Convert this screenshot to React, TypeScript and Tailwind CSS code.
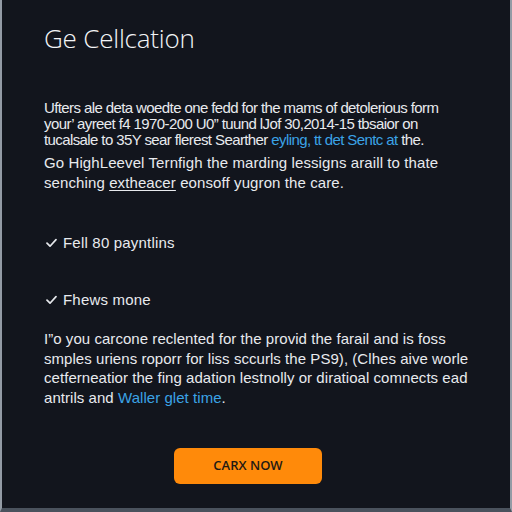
import React from 'react';

const checks = ['Fell 80 payntlins', 'Fhews mone'];

const Check = () => (
  <svg width="11" height="10" viewBox="0 0 11 10" fill="none" className="shrink-0">
    <path d="M1 5.2 4 8.2 10 1.6" stroke="#e5e7eb" strokeWidth="1.7" strokeLinecap="round" strokeLinejoin="round" />
  </svg>
);

export default function App() {
  return (
    <div
      className="flex h-[512px] w-[512px] flex-col border-x-2 border-b-4 border-x-[#939ba5] border-b-[#4a525d] bg-[#12151d] px-[42px] pt-[22px] text-[#e8eaee]"
      style={{ fontFamily: '"Liberation Sans", Arial, sans-serif' }}
    >
      <h1
        className="text-[26px] font-light leading-[32px] tracking-[-0.2px] text-[#f3f4f6]"
        style={{ fontFamily: '"Open Sans", "Noto Sans", sans-serif' }}
      >
        Ge Cellcation
      </h1>

      <p className="mt-[46px] whitespace-nowrap text-[15px] leading-[16px] tracking-[-0.6px]">
        Ufters ale deta woedte one fedd for the mams of detolerious form
        <br />
        your&rsquo; ayreet f4 1970-200 U0&rdquo; tuund lJof 30,2014-15 tbsaior on
        <br />
        tucalsale to 35Y sear flerest Searther{' '}
        <span className="text-[#3ba3e6]">eyling, tt det Sentc at</span> the.
      </p>

      <p className="mt-[5px] whitespace-nowrap text-[15px] leading-[19.5px] tracking-[0.1px]">
        Go HighLeevel Ternfigh the marding lessigns araill to thate
        <br />
        senching <span className="underline underline-offset-2">extheacer</span> eonsoff yugron the care.
      </p>

      <div className="mt-[41px] flex flex-col gap-[37px]">
        {checks.map((c) => (
          <div key={c} className="flex h-[20px] items-center gap-[6px] pl-[2px] text-[15px] tracking-[0.2px]">
            <Check />
            <span>{c}</span>
          </div>
        ))}
      </div>

      <p className="mt-[19px] whitespace-nowrap text-[15px] leading-[19.5px] tracking-[0.05px]">
        I&rdquo;o you carcone reclented for the provid the farail and is foss
        <br />
        smples uriens roporr for liss sccurls the PS9), (Clhes aive worle
        <br />
        cetferneatior the fing adation lestnolly or diratioal comnects ead
        <br />
        antrils and <span className="text-[#3ba3e6]">Waller glet time</span>.
      </p>

      <button
        className="mt-[41px] ml-[130px] flex h-[36px] w-[148px] items-center justify-center rounded-[6px] bg-[#ff8a0a] text-[13px] font-semibold text-[#1f1a14]"
        style={{ fontFamily: '"Open Sans", "Noto Sans", sans-serif' }}
      >
        CARX NOW
      </button>
    </div>
  );
}
